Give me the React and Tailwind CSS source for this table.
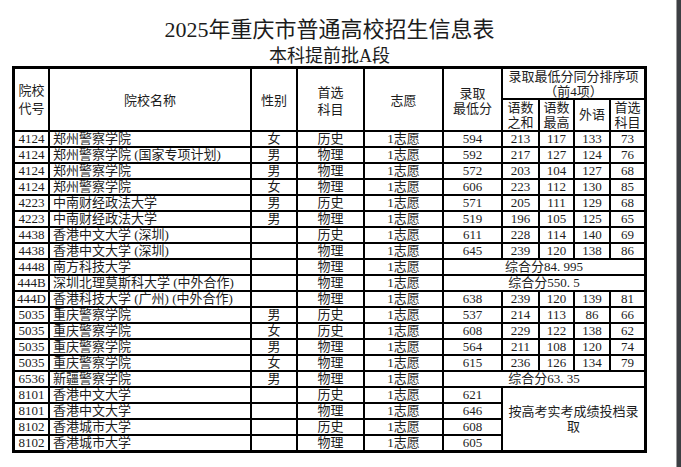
import React from 'react';
import clsx from 'clsx';

const rows = [
    ['4124', '郑州警察学院', '女', '历史', '594', ['213', '117', '133', '73']],
    ['4124', '郑州警察学院 (国家专项计划)', '男', '物理', '592', ['217', '127', '124', '76']],
    ['4124', '郑州警察学院', '男', '物理', '572', ['203', '104', '127', '68']],
    ['4124', '郑州警察学院', '女', '物理', '606', ['223', '112', '130', '85']],
    ['4223', '中南财经政法大学', '男', '历史', '571', ['205', '111', '129', '68']],
    ['4223', '中南财经政法大学', '男', '物理', '519', ['196', '105', '125', '65']],
    ['4438', '香港中文大学 (深圳)', '', '历史', '611', ['228', '114', '140', '69']],
    ['4438', '香港中文大学 (深圳)', '', '物理', '645', ['239', '120', '138', '86']],
    ['4448', '南方科技大学', '', '物理', '综合分84. 995', null],
    ['444B', '深圳北理莫斯科大学 (中外合作)', '', '物理', '综合分550. 5', null],
    ['444D', '香港科技大学 (广州) (中外合作)', '', '物理', '638', ['239', '120', '139', '81']],
    ['5035', '重庆警察学院', '男', '历史', '537', ['214', '113', '86', '66']],
    ['5035', '重庆警察学院', '女', '历史', '608', ['229', '122', '138', '62']],
    ['5035', '重庆警察学院', '男', '物理', '564', ['211', '108', '120', '74']],
    ['5035', '重庆警察学院', '女', '物理', '615', ['236', '126', '134', '79']],
    ['6536', '新疆警察学院', '男', '物理', '综合分63. 35', null],
    ['8101', '香港中文大学', '', '历史', '621', 'merged'],
    ['8101', '香港中文大学', '', '物理', '646', 'skip'],
    ['8102', '香港城市大学', '', '历史', '608', 'skip'],
    ['8102', '香港城市大学', '', '物理', '605', 'skip'],
];

const Cell = ({ children, className }) => (
    <div className={clsx('bg-white flex items-center justify-center text-[13px] leading-[14px] whitespace-nowrap', className)}>
        {children}
    </div>
);

const App = () => {
    return (
        <div className="flex h-[467px] w-[681px] overflow-hidden bg-white text-[#1c1c1c] font-['Liberation_Serif','Noto_Sans_CJK_SC',serif]">
            <div className="flex-1">
                <div className="ml-[12px] w-[635px]">
                    <div className="mt-[18px] h-[24px] text-center text-[22px] leading-[24px]">2025年重庆市普通高校招生信息表</div>
                    <div className="mt-[4px] h-[20px] text-center text-[18px] leading-[20px]">本科提前批A段</div>

                    <div className="grid grid-cols-[33px_200px_44px_65px_77px_57px_35px_33px_34px_33px] grid-rows-[29px_30px_repeat(20,14px)] gap-[2px] border-[3px] border-black bg-black">
                        <Cell className="row-span-2 flex-col leading-[18px]"><span>院校</span><span>代号</span></Cell>
                        <Cell className="row-span-2 pt-[3px]">院校名称</Cell>
                        <Cell className="row-span-2 pt-[3px]">性别</Cell>
                        <Cell className="row-span-2 flex-col pt-[3px] leading-[17px]"><span>首选</span><span>科目</span></Cell>
                        <Cell className="row-span-2 pt-[3px]">志愿</Cell>
                        <Cell className="row-span-2 flex-col pt-[2px] leading-[15px]"><span>录取</span><span>最低分</span></Cell>
                        <Cell className="col-span-4 flex-col leading-[15px]"><span>录取最低分同分排序项</span><span>（前4项）</span></Cell>
                        <Cell className="flex-col leading-[15px]"><span>语数</span><span>之和</span></Cell>
                        <Cell className="flex-col leading-[15px]"><span>语数</span><span>最高</span></Cell>
                        <Cell>外语</Cell>
                        <Cell className="flex-col leading-[15px]"><span>首选</span><span>科目</span></Cell>

                        {rows.map(([code, name, sex, subject, score, rank], i) => (
                            <React.Fragment key={i}>
                                <Cell>{code}</Cell>
                                <Cell className="justify-start pl-[3px]">{name}</Cell>
                                <Cell>{sex}</Cell>
                                <Cell>{subject}</Cell>
                                <Cell>1志愿</Cell>
                                {rank === null ? (
                                    <Cell className="col-span-5">{score}</Cell>
                                ) : (
                                    <Cell>{score}</Cell>
                                )}
                                {Array.isArray(rank) && rank.map((v, j) => <Cell key={j}>{v}</Cell>)}
                                {rank === 'merged' && (
                                    <Cell className="col-span-4 row-span-4 flex-col leading-[15.5px]">
                                        <span>按高考实考成绩投档录</span>
                                        <span>取</span>
                                    </Cell>
                                )}
                            </React.Fragment>
                        ))}
                    </div>
                </div>
            </div>
            <div className="w-[1px] bg-[#9a9a9a]" />
            <div className="w-[4px] bg-[#3c3f43]" />
        </div>
    );
};

export default App;
